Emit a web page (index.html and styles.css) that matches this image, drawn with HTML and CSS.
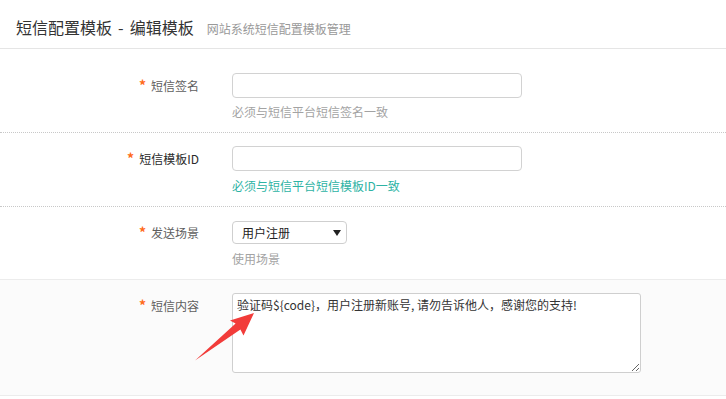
FILE: index.html
```html
<!DOCTYPE html>
<html lang="zh-CN">
<head>
<meta charset="utf-8">
<title>短信配置模板 - 编辑模板</title>
<link rel="stylesheet" href="styles.css">
</head>
<body>
<div class="page">
  <div class="header">
    <span class="title">短信配置模板 - 编辑模板</span>
    <span class="subtitle">网站系统短信配置模板管理</span>
  </div>
  <form class="form">
    <div class="row row-dotted">
      <label class="label"><span class="req">*</span>短信签名</label>
      <div class="field">
        <input class="input" type="text">
        <div class="hint">必须与短信平台短信签名一致</div>
      </div>
    </div>
    <div class="row row-dotted">
      <label class="label label-dark"><span class="req">*</span>短信模板ID</label>
      <div class="field">
        <input class="input" type="text">
        <div class="hint hint-teal">必须与短信平台短信模板ID一致</div>
      </div>
    </div>
    <div class="row row-solid">
      <label class="label"><span class="req">*</span>发送场景</label>
      <div class="field">
        <div class="select-wrap">
          <select class="select"><option>用户注册</option></select>
          <svg class="caret" width="8" height="6" viewBox="0 0 8 6"><path d="M0 0H8L4 6Z" fill="#222"/></svg>
        </div>
        <div class="hint hint-loose">使用场景</div>
      </div>
    </div>
    <div class="row row-shaded">
      <label class="label"><span class="req">*</span>短信内容</label>
      <div class="field">
        <textarea class="textarea">验证码${code}，用户注册新账号, 请勿告诉他人，感谢您的支持!</textarea>
      </div>
      <svg class="arrow" width="70" height="56" viewBox="190 28 70 56">
        <path d="M254 33 L230 40.5 L235.6 43.6 L195 80.5 L240.4 49.6 L243.5 55.5 Z" fill="#f23c3a"/>
      </svg>
    </div>
  </form>
</div>
</body>
</html>
```
FILE: styles.css
```css
* { box-sizing: border-box; }
html, body { margin: 0; padding: 0; background: #fff; }
body {
  font-family: "Noto Sans CJK SC", "Noto Sans", "Liberation Sans", sans-serif;
  color: #333;
  font-size: 12px;
}
.page { width: 726px; }
.header {
  display: flex;
  align-items: baseline;
  height: 49px;
  padding: 15px 16px 0;
  border-bottom: 1px solid #e5e5e5;
}
.title {
  font-size: 16px;
  line-height: 24px;
  color: #333;
  word-spacing: 2.5px;
}
.subtitle {
  margin-left: 13px;
  font-size: 12px;
  color: #999;
}
.form { padding-top: 11px; margin: 0; }
.row {
  position: relative;
  display: flex;
  align-items: flex-start;
  padding: 13px 0 10px;
}
.row-dotted { border-bottom: 1px dotted #c8c8c8; }
.row-solid { border-bottom: 1px solid #ececec; }
.row-shaded {
  background: #fbfbfb;
  padding-bottom: 22px;
  border-bottom: 1px solid #ececec;
}
.label {
  width: 232px;
  padding-right: 33px;
  text-align: right;
  line-height: 25px;
  font-size: 12px;
  color: #5e5e5e;
}
.label-dark { color: #2a2a2a; }
.req {
  color: #ff6a1a;
  font-size: 14px;
  font-weight: bold;
  margin-right: 5px;
}
.field { display: flex; flex-direction: column; }
.input {
  width: 290px;
  height: 25px;
  border: 1px solid #d2d2d2;
  border-radius: 4px;
  background: #fff;
  margin: 0;
  padding: 0 6px;
  outline: none;
}
.hint {
  margin-top: 4px;
  line-height: 20px;
  font-size: 12px;
  color: #a3a3a3;
}
.hint-teal { color: #2eb3a4; margin-top: 5px; }
.hint-loose { margin-top: 5px; }
.select-wrap {
  position: relative;
  width: 115px;
  height: 23px;
  margin-top: 1px;
}
.select {
  appearance: none;
  -webkit-appearance: none;
  width: 115px;
  height: 23px;
  margin: 0;
  padding: 0 0 0 9px;
  border: 1px solid #cfcfcf;
  border-radius: 4px;
  background: #fff;
  font-family: inherit;
  font-size: 12px;
  color: #222;
  outline: none;
}
.caret {
  position: absolute;
  right: 6px;
  top: 9px;
}
.textarea {
  display: block;
  width: 409px;
  height: 80px;
  margin: 0;
  padding: 2px 4px;
  border: 1px solid #cfcfcf;
  border-radius: 3px;
  background: #fff;
  font-family: inherit;
  font-size: 12px;
  line-height: 18px;
  color: #333;
  outline: none;
}
.arrow {
  position: absolute;
  left: 190px;
  top: 28px;
}
```
